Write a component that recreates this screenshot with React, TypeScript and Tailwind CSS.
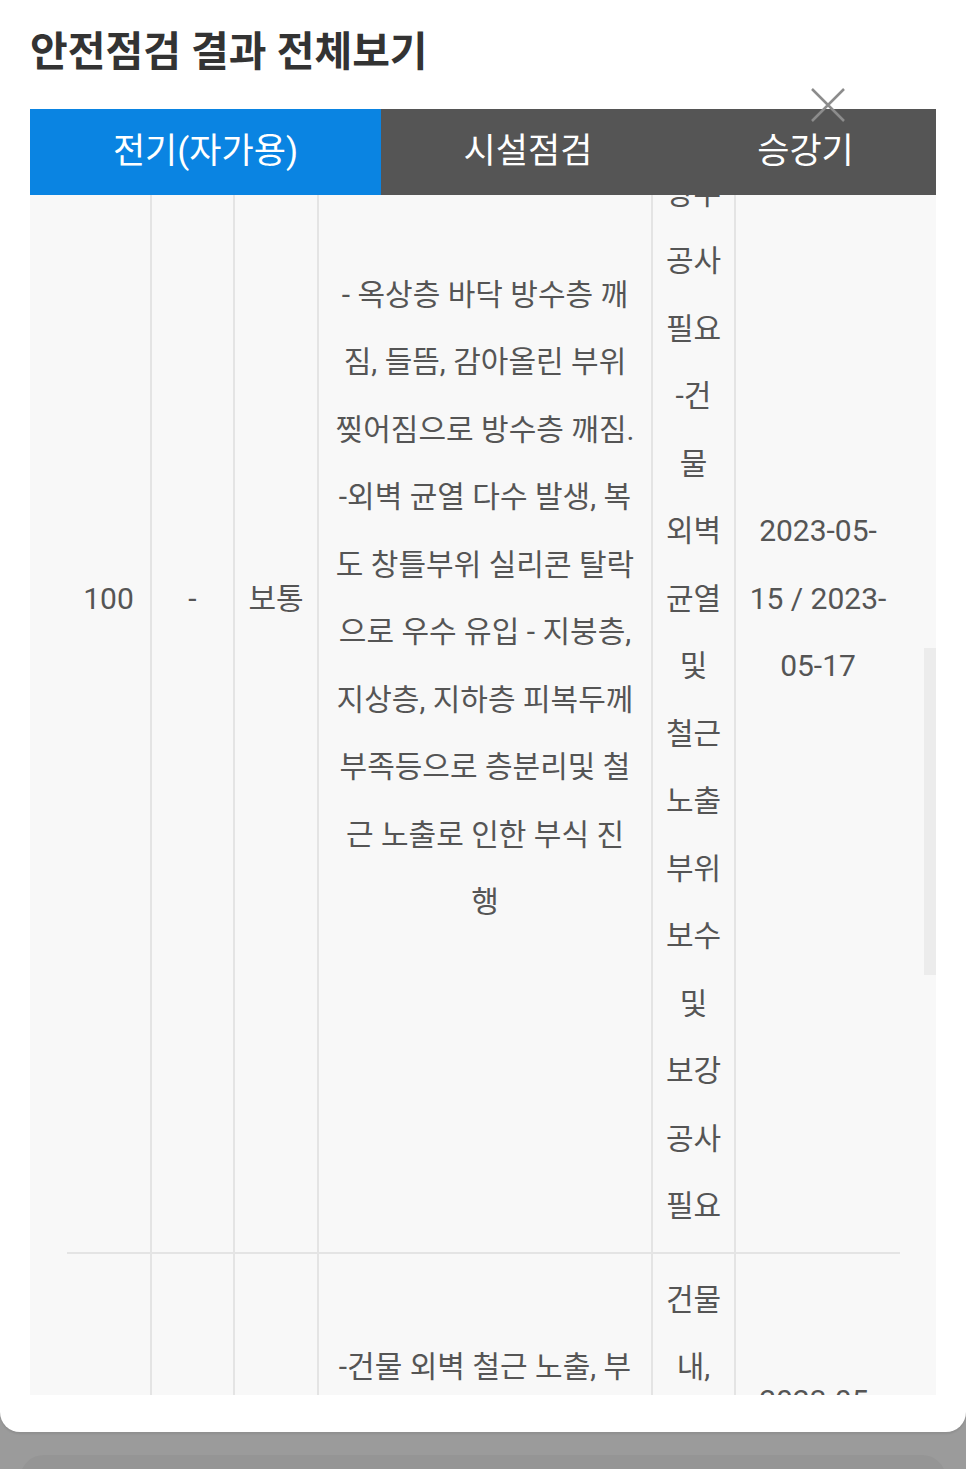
const font = "font-[Roboto,'Noto_Sans_CJK_KR',sans-serif]";

type Row = {
  no: string;
  grade: string;
  state: string;
  desc: string[];
  action: string[];
  date: string[];
};

const rows: Row[] = [
  {
    no: "100",
    grade: "-",
    state: "보통",
    desc: [
      "- 옥상층 바닥 방수층 깨",
      "짐, 들뜸, 감아올린 부위",
      "찢어짐으로 방수층 깨짐.",
      "-외벽 균열 다수 발생, 복",
      "도 창틀부위 실리콘 탈락",
      "으로 우수 유입 - 지붕층,",
      "지상층, 지하층 피복두께",
      "부족등으로 층분리및 철",
      "근 노출로 인한 부식 진",
      "행",
    ],
    action: [
      "-옥",
      "상",
      "바닥",
      "방수",
      "공사",
      "필요",
      "-건",
      "물",
      "외벽",
      "균열",
      "및",
      "철근",
      "노출",
      "부위",
      "보수",
      "및",
      "보강",
      "공사",
      "필요",
    ],
    date: ["2023-05-", "15 / 2023-", "05-17"],
  },
  {
    no: "100",
    grade: "-",
    state: "보통",
    desc: [
      "-건물 외벽 철근 노출, 부",
      "식 및 콘크리트 박리 발",
      "생, 누수 흔적 다수 확인",
      "됨",
    ],
    action: ["건물", "내,", "외부", "보수", "공사", "필요"],
    date: ["2023-05-", "15 / 2023-", "05-17"],
  },
];

function Lines({ lines, className = "" }: { lines: string[]; className?: string }) {
  return (
    <div className={`flex flex-col items-center ${className}`}>
      {lines.map((l, i) => (
        <div key={i} className="whitespace-nowrap leading-[67.5px]">
          {l}
        </div>
      ))}
    </div>
  );
}

function Cell({ children, first }: { children: React.ReactNode; first?: boolean }) {
  return (
    <div
      className={`flex items-center justify-center py-3 ${
        first ? "" : "border-l-2 border-[#e4e4e4]"
      }`}
    >
      {children}
    </div>
  );
}

function CloseIcon() {
  return (
    <svg
      className="absolute left-[810px] top-[87px] h-[36px] w-[36px]"
      viewBox="0 0 36 36"
      fill="none"
      stroke="#8c8c8c"
      strokeWidth="2.5"
    >
      <path d="M2 2L34 34M34 2L2 34" />
    </svg>
  );
}

export default function App() {
  return (
    <div className={`relative h-[1469px] w-[966px] overflow-hidden bg-[#9b9b9b] ${font}`}>
      <div className="relative flex h-[1432px] flex-col rounded-b-[20px] bg-white shadow-[0_2px_2px_rgba(0,0,0,0.08)]">
        <div className="h-[109px] pl-[30px] pt-[29px]">
          <h1 className="text-[41px] font-bold leading-[46px] text-[#333]">
            안전점검 결과 전체보기
          </h1>
        </div>

        <div className="mx-[30px] flex h-[86px] text-[35px] text-white">
          <div className="flex w-[351px] items-center justify-center bg-[#0a84e2]">
            전기(자가용)
          </div>
          <div className="flex w-[294px] items-center justify-center bg-[#555]">
            시설점검
          </div>
          <div className="flex flex-1 items-center justify-center bg-[#555]">승강기</div>
        </div>

        <div className="relative mx-[30px] h-[1200px] overflow-hidden bg-[#f8f8f8] text-[#555]">
          <div className="-mt-[250px] pl-[37px]">
            {rows.map((r, i) => (
              <div
                key={i}
                className="grid w-[833px] grid-cols-[83px_83px_84px_334px_83px_166px] border-b-2 border-[#e4e4e4]"
              >
                <Cell first>
                  <span className="text-[30px]">{r.no}</span>
                </Cell>
                <Cell>
                  <span className="text-[30px]">{r.grade}</span>
                </Cell>
                <Cell>
                  <span className="text-[30px]">{r.state}</span>
                </Cell>
                <Cell>
                  <Lines lines={r.desc} className="text-[30px]" />
                </Cell>
                <Cell>
                  <Lines lines={r.action} className="text-[30px]" />
                </Cell>
                <Cell>
                  <Lines lines={r.date} className="text-[30px]" />
                </Cell>
              </div>
            ))}
          </div>
          <div className="absolute right-0 top-[453px] h-[327px] w-[12px] bg-[#ececec]" />
        </div>

        <CloseIcon />
      </div>
      <div className="mx-[20px] mt-[23px] h-[40px] rounded-t-[24px] bg-[#959595]" />
    </div>
  );
}
